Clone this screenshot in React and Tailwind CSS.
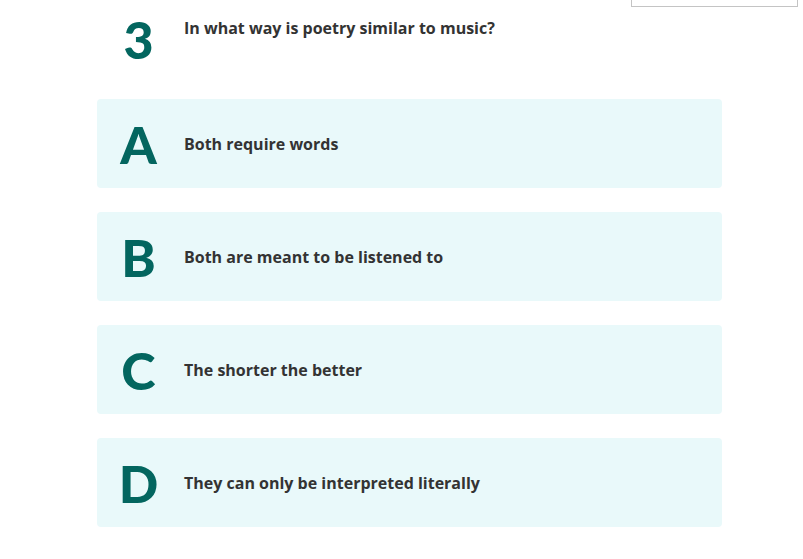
import React from 'react';

const options = [
  { key: 'A', text: 'Both require words' },
  { key: 'B', text: 'Both are meant to be listened to' },
  { key: 'C', text: 'The shorter the better' },
  { key: 'D', text: 'They can only be interpreted literally' },
];

const body = { fontFamily: '"Open Sans", Lato, sans-serif' };

export default function App() {
  return (
    <div className="min-h-screen w-[803px] bg-white text-[#333333]" style={{ fontFamily: 'Lato, "Open Sans", sans-serif' }}>
      <div className="flex justify-end pr-[5px]">
        <div className="h-[7px] w-[167px] border border-t-0 border-[#c4c4c4] bg-white" />
      </div>

      <div className="ml-[97px] w-[625px]">
        {/* question */}
        <div className="flex items-start pt-[6px]">
          <div className="w-[87px] pr-[4px] text-center text-[52px] font-black leading-none text-[#03665f]">3</div>
          <p className="pt-[4px] text-[16px] font-bold leading-[22px]" style={body}>In what way is poetry similar to music?</p>
        </div>

        {/* answers */}
        <div className="mt-[34px] flex flex-col gap-[24px]">
          {options.map((o) => (
            <div key={o.key} className="flex h-[89px] items-center rounded-[4px] bg-[#e9f9fa]">
              <div className="w-[87px] pr-[4px] text-center text-[52px] font-black leading-none text-[#03665f]">{o.key}</div>
              <p className="text-[16px] font-bold" style={body}>{o.text}</p>
            </div>
          ))}
        </div>
      </div>
    </div>
  );
}
